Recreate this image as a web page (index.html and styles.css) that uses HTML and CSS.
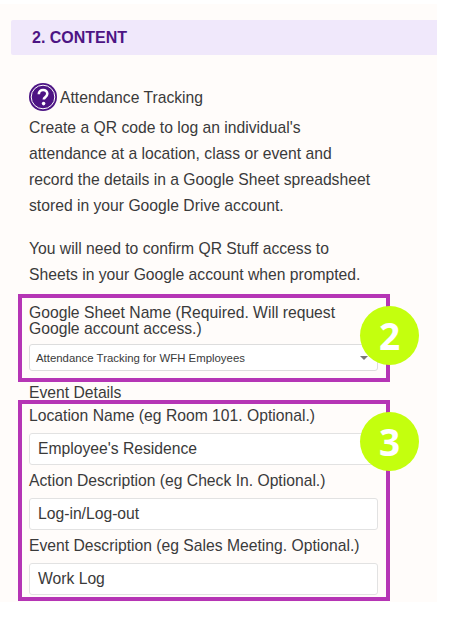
FILE: index.html
```html
<!DOCTYPE html>
<html lang="en">
<head>
<meta charset="UTF-8">
<title>Attendance Tracking</title>
<link rel="stylesheet" href="styles.css">
</head>
<body>
<div class="panel">
    <h2 class="section-head">2. CONTENT</h2>

    <div class="intro-title">
        <svg class="help-icon" width="28" height="28" viewBox="0 0 28 28">
            <circle cx="14" cy="14" r="14" fill="#4d1484"/>
            <circle cx="14" cy="14" r="11.8" fill="none" stroke="#fff" stroke-width="1"/>
            <path d="M9.8 11.2c0-2.6 1.9-4.2 4.3-4.2s4.2 1.5 4.2 3.8c0 1.8-1 2.7-2.2 3.6-1 .7-1.3 1.1-1.3 2.2" fill="none" stroke="#fff" stroke-width="2.6"/>
            <circle cx="14.6" cy="20.6" r="1.8" fill="#fff"/>
        </svg>
        <span class="intro-name">Attendance Tracking</span>
    </div>
    <p class="intro">Create a QR code to log an individual's attendance at a location, class or event and record the details in a Google Sheet spreadsheet stored in your Google Drive account.</p>
    <p class="intro intro-last">You will need to confirm QR Stuff access to Sheets in your Google account when prompted.</p>

    <div class="callout callout-sheet">
        <label class="field-label">Google Sheet Name (Required. Will request Google account access.)</label>
        <div class="select-box">
            <span>Attendance Tracking for WFH Employees</span>
            <i class="caret"></i>
        </div>
        <div class="badge">2</div>
    </div>

    <div class="group-label">Event Details</div>

    <div class="callout callout-event">
        <label class="field-label">Location Name (eg Room 101. Optional.)</label>
        <input class="text-box" type="text" value="Employee's Residence">
        <label class="field-label">Action Description (eg Check In. Optional.)</label>
        <input class="text-box" type="text" value="Log-in/Log-out">
        <label class="field-label">Event Description (eg Sales Meeting. Optional.)</label>
        <input class="text-box" type="text" value="Work Log">
        <div class="badge">3</div>
    </div>
</div>
</body>
</html>
```

FILE: styles.css
```css
body {
    margin: 0;
    background-color: #fff;
    font-family: "Liberation Sans", Arial, sans-serif;
    color: #3a3a3a;
}
.panel {
    width: 437px;
    height: 598px;
    margin-top: 4px;
    padding-top: 16px;
    box-sizing: border-box;
    background-color: #fffcfa;
}
.section-head {
    margin: 0 0 0 11px;
    height: 35px;
    line-height: 36px;
    padding-left: 21px;
    font-size: 16px;
    font-weight: bold;
    color: #4d1484;
    background-color: #f0e8fb;
    border-radius: 2px 0 0 2px;
}
.intro-title {
    display: flex;
    align-items: center;
    gap: 3px;
    margin: 28px 0 0 29px;
    font-size: 15.7px;
}
.intro-name {
    padding-top: 2px;
}
.help-icon {
    flex: none;
}
.intro {
    width: 350px;
    margin: 4px 0 17px 29px;
    font-size: 15.7px;
    line-height: 26px;
}
.intro-last {
    margin-bottom: 6px;
}
.callout {
    position: relative;
    box-sizing: border-box;
    width: 372px;
    margin-left: 18px;
    padding: 7px 8px 0 7px;
    border: 4px solid #b535b5;
}
.callout-sheet {
    height: 88px;
}
.callout-event {
    height: 201px;
    padding-top: 4px;
}
.field-label {
    display: block;
    font-size: 15.7px;
    line-height: 16px;
}
.select-box {
    display: flex;
    align-items: center;
    justify-content: space-between;
    box-sizing: border-box;
    height: 27px;
    margin-top: 7px;
    padding: 0 9px 0 6px;
    font-size: 11.4px;
    color: #3a3a3a;
    background-color: #fff;
    border: 1px solid #ddd;
    border-radius: 3px;
}
.caret {
    width: 0;
    height: 0;
    border-left: 4px solid transparent;
    border-right: 4px solid transparent;
    border-top: 4px solid #777;
}
.text-box {
    display: block;
    box-sizing: border-box;
    width: 100%;
    height: 32px;
    margin: 9px 0 8px;
    padding: 0 8px;
    font-family: "Liberation Sans", Arial, sans-serif;
    font-size: 15.7px;
    color: #3a3a3a;
    background-color: #fff;
    border: 1px solid #e2e2e2;
    border-radius: 3px;
}
.group-label {
    margin: 3px 0 0 29px;
    font-size: 15.7px;
    line-height: 15px;
}
.badge {
    position: absolute;
    top: 8px;
    left: 338px;
    width: 59px;
    height: 59px;
    line-height: 60px;
    text-align: center;
    font-family: "Open Sans", sans-serif;
    font-size: 37px;
    font-weight: bold;
    color: #fff;
    background-color: #c4ff0e;
    border-radius: 50%;
}
```
